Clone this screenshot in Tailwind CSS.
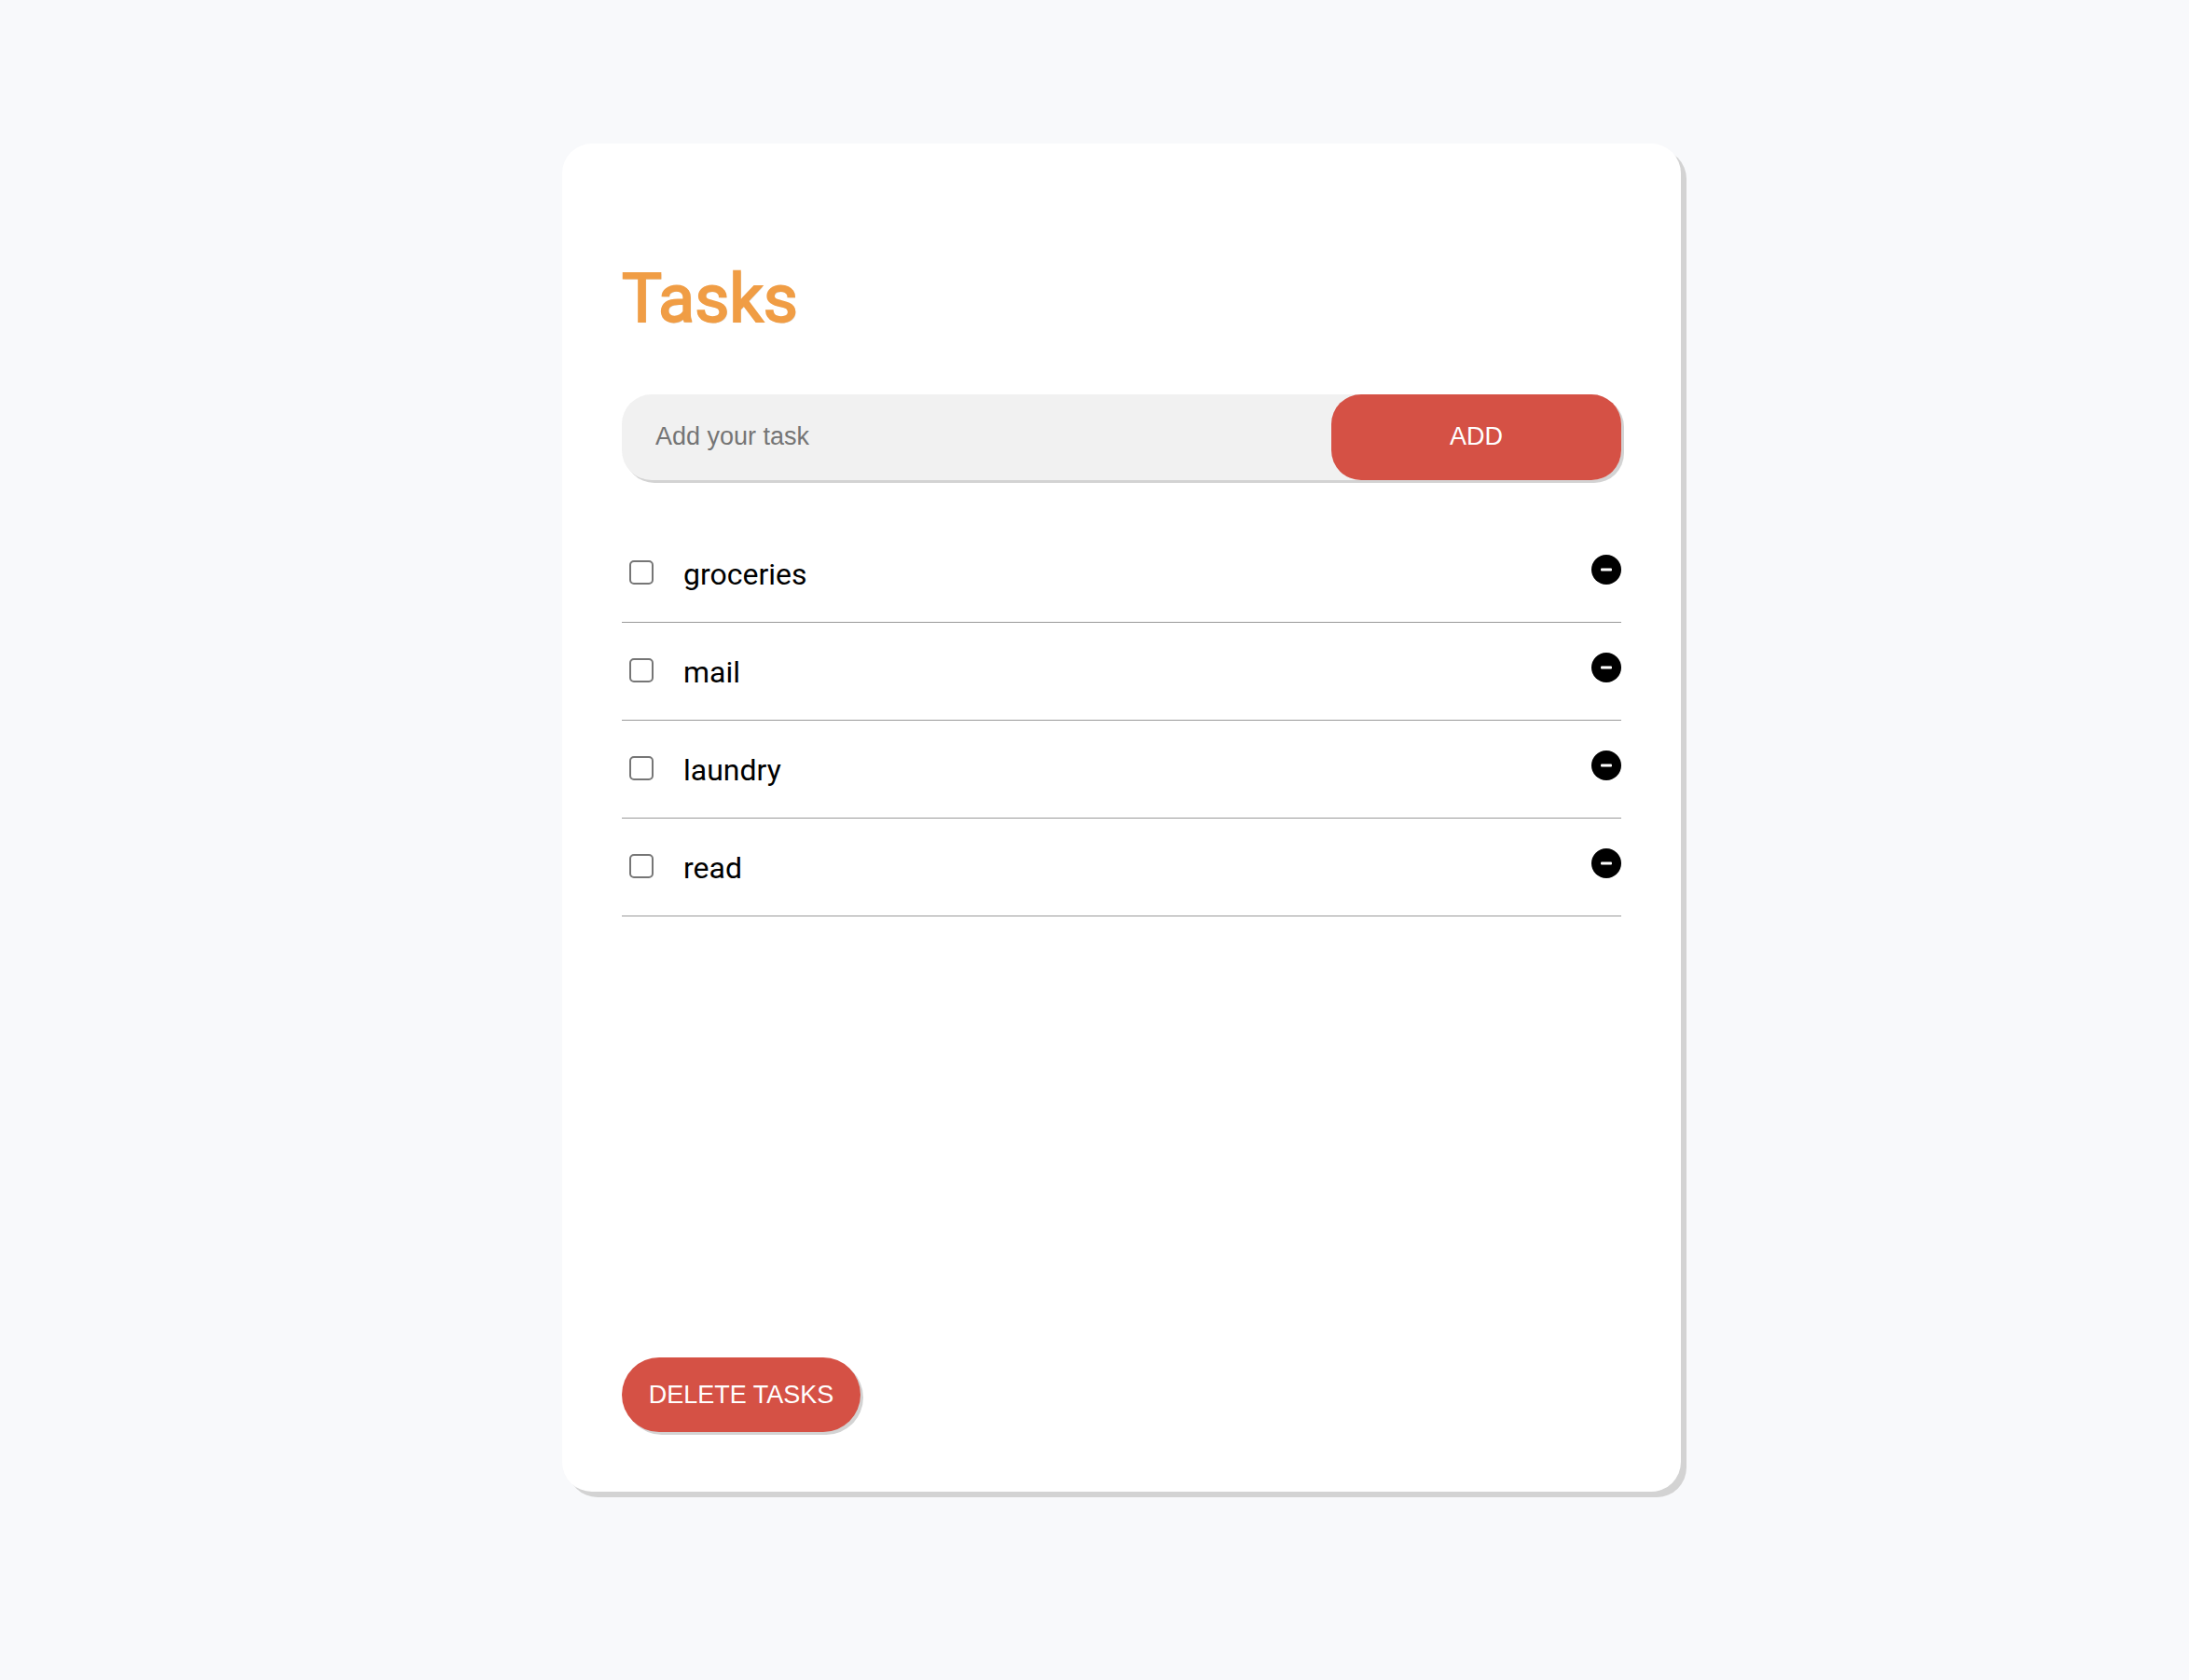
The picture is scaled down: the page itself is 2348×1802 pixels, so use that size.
<!DOCTYPE html>
<html lang="en">
<head>
<meta charset="utf-8">
<meta name="viewport" content="width=device-width, initial-scale=1">
<title>Tasks</title>
<script src="https://cdn.jsdelivr.net/npm/@tailwindcss/browser@4"></script>
</head>
<body class="min-h-screen bg-[#f8f9fb] pt-[154px] pb-16 pl-[58px] font-['Roboto',sans-serif] text-black">
<main class="mx-auto flex min-h-[1446px] w-full max-w-[1200px] flex-col items-start rounded-[32px] bg-white p-16 shadow-[6px_6px_0_#d3d3d3]">
  <h1 class="mt-[59px] text-[72px] leading-[88px] font-normal text-[#f09d45] [-webkit-text-stroke:2px_#f09d45] [text-shadow:1px_1px_1px_#d3d3d3]">Tasks</h1>

  <form class="mt-[58px] flex h-[92px] w-full rounded-[32px] bg-[#f1f1f1] shadow-[3px_3px_0_#d3d3d3]" onsubmit="return false">
    <input type="text" aria-label="Add your task" placeholder="Add your task" class="min-w-0 flex-1 bg-transparent px-9 pb-0.5 font-['Liberation_Sans',sans-serif] text-[27px] outline-none placeholder:text-[#757575]">
    <button type="submit" class="w-[311px] rounded-[32px] bg-[#d55145] pb-0.5 font-['Liberation_Sans',sans-serif] text-[27px] text-white">ADD</button>
  </form>

  <ul class="mt-12 w-full text-[32px] leading-[42px]">
    <li class="flex h-[105px] items-start border-b border-[#999] pt-8">
      <input id="t1" type="checkbox" class="mt-1.5 ml-2 size-[26px] appearance-none rounded-[5px] border-2 border-[#767676] bg-white checked:bg-[#767676]">
      <label for="t1" class="ml-8 flex-1">groceries</label>
      <button type="button" aria-label="Remove groceries"><svg class="block size-8" viewBox="0 0 32 32"><circle cx="16" cy="16" r="16"/><rect x="10" y="14.5" width="12" height="3" rx="1" fill="#fff"/></svg></button>
    </li>
    <li class="flex h-[105px] items-start border-b border-[#999] pt-8">
      <input id="t2" type="checkbox" class="mt-1.5 ml-2 size-[26px] appearance-none rounded-[5px] border-2 border-[#767676] bg-white checked:bg-[#767676]">
      <label for="t2" class="ml-8 flex-1">mail</label>
      <button type="button" aria-label="Remove mail"><svg class="block size-8" viewBox="0 0 32 32"><circle cx="16" cy="16" r="16"/><rect x="10" y="14.5" width="12" height="3" rx="1" fill="#fff"/></svg></button>
    </li>
    <li class="flex h-[105px] items-start border-b border-[#999] pt-8">
      <input id="t3" type="checkbox" class="mt-1.5 ml-2 size-[26px] appearance-none rounded-[5px] border-2 border-[#767676] bg-white checked:bg-[#767676]">
      <label for="t3" class="ml-8 flex-1">laundry</label>
      <button type="button" aria-label="Remove laundry"><svg class="block size-8" viewBox="0 0 32 32"><circle cx="16" cy="16" r="16"/><rect x="10" y="14.5" width="12" height="3" rx="1" fill="#fff"/></svg></button>
    </li>
    <li class="flex h-[105px] items-start border-b border-[#999] pt-8">
      <input id="t4" type="checkbox" class="mt-1.5 ml-2 size-[26px] appearance-none rounded-[5px] border-2 border-[#767676] bg-white checked:bg-[#767676]">
      <label for="t4" class="ml-8 flex-1">read</label>
      <button type="button" aria-label="Remove read"><svg class="block size-8" viewBox="0 0 32 32"><circle cx="16" cy="16" r="16"/><rect x="10" y="14.5" width="12" height="3" rx="1" fill="#fff"/></svg></button>
    </li>
  </ul>

  <button type="button" class="mt-auto h-20 w-64 rounded-full bg-[#d55145] font-['Liberation_Sans',sans-serif] text-[27px] whitespace-nowrap text-white shadow-[3px_3px_0_#d3d3d3]">DELETE TASKS</button>
</main>
</body>
</html>
